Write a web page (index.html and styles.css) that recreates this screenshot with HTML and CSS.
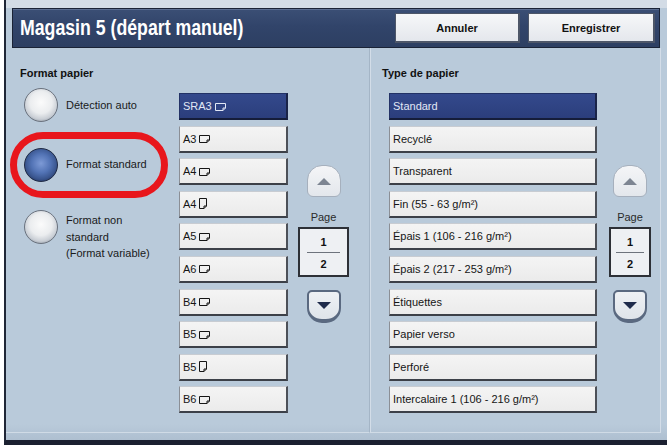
FILE: index.html
```html
<!DOCTYPE html>
<html lang="fr">
<head>
<meta charset="utf-8">
<title>Magasin 5 (départ manuel)</title>
<link rel="stylesheet" href="styles.css">
</head>
<body>
<div class="screen">
  <header class="titlebar">
    <h1 class="title"><span class="title-text">Magasin 5 (départ manuel)</span></h1>
    <div class="actions">
      <button class="tbtn tbtn-cancel">Annuler</button>
      <button class="tbtn tbtn-save">Enregistrer</button>
    </div>
  </header>
  <main class="content">
    <section class="panel panel-left">
      <h2 class="heading">Format papier</h2>
      <div class="body">
        <div class="radios">
          <div class="radio r1"><span class="dot"></span><span class="rlabel">Détection auto</span></div>
          <div class="radio r2"><span class="dot dot-on"></span><span class="rlabel">Format standard</span><span class="mark"></span></div>
          <div class="radio r3"><span class="dot"></span><span class="rlabel rlabel-multi">Format non<br>standard<br>(Format variable)</span></div>
        </div>
        <div class="list list-size">
          <div class="item item-sel">SRA3<svg class="ico-l" width="11" height="8" viewBox="0 0 11 8"><path d="M0.5 0.5H10.5V5L8 7.5H0.5Z M8 7.5V5H10.5" fill="none" stroke="currentColor"/></svg></div>
          <div class="item">A3<svg class="ico-l" width="11" height="8" viewBox="0 0 11 8"><path d="M0.5 0.5H10.5V5L8 7.5H0.5Z M8 7.5V5H10.5" fill="none" stroke="currentColor"/></svg></div>
          <div class="item">A4<svg class="ico-l" width="11" height="8" viewBox="0 0 11 8"><path d="M0.5 0.5H10.5V5L8 7.5H0.5Z M8 7.5V5H10.5" fill="none" stroke="currentColor"/></svg></div>
          <div class="item">A4<svg class="ico-p" width="8" height="11" viewBox="0 0 8 11"><path d="M0.5 0.5H7.5V8L5 10.5H0.5Z M5 10.5V8H7.5" fill="none" stroke="currentColor"/></svg></div>
          <div class="item">A5<svg class="ico-l" width="11" height="8" viewBox="0 0 11 8"><path d="M0.5 0.5H10.5V5L8 7.5H0.5Z M8 7.5V5H10.5" fill="none" stroke="currentColor"/></svg></div>
          <div class="item">A6<svg class="ico-l" width="11" height="8" viewBox="0 0 11 8"><path d="M0.5 0.5H10.5V5L8 7.5H0.5Z M8 7.5V5H10.5" fill="none" stroke="currentColor"/></svg></div>
          <div class="item">B4<svg class="ico-l" width="11" height="8" viewBox="0 0 11 8"><path d="M0.5 0.5H10.5V5L8 7.5H0.5Z M8 7.5V5H10.5" fill="none" stroke="currentColor"/></svg></div>
          <div class="item">B5<svg class="ico-l" width="11" height="8" viewBox="0 0 11 8"><path d="M0.5 0.5H10.5V5L8 7.5H0.5Z M8 7.5V5H10.5" fill="none" stroke="currentColor"/></svg></div>
          <div class="item">B5<svg class="ico-p" width="8" height="11" viewBox="0 0 8 11"><path d="M0.5 0.5H7.5V8L5 10.5H0.5Z M5 10.5V8H7.5" fill="none" stroke="currentColor"/></svg></div>
          <div class="item">B6<svg class="ico-l" width="11" height="8" viewBox="0 0 11 8"><path d="M0.5 0.5H10.5V5L8 7.5H0.5Z M8 7.5V5H10.5" fill="none" stroke="currentColor"/></svg></div>
        </div>
        <div class="pager pager-left">
          <button class="pg-up"><span class="tri-up"></span></button>
          <div class="pg-label">Page</div>
          <div class="pg-box"><span class="pg-num">1</span><span class="pg-rule"></span><span class="pg-num">2</span></div>
          <button class="pg-down"><span class="tri-down"></span></button>
        </div>
      </div>
    </section>
    <section class="panel panel-right">
      <h2 class="heading">Type de papier</h2>
      <div class="body">
        <div class="list list-type">
          <div class="item item-sel">Standard</div>
          <div class="item">Recyclé</div>
          <div class="item">Transparent</div>
          <div class="item">Fin (55 - 63 g/m²)</div>
          <div class="item">Épais 1 (106 - 216 g/m²)</div>
          <div class="item">Épais 2 (217 - 253 g/m²)</div>
          <div class="item">Étiquettes</div>
          <div class="item">Papier verso</div>
          <div class="item">Perforé</div>
          <div class="item">Intercalaire 1 (106 - 216 g/m²)</div>
        </div>
        <div class="pager pager-right">
          <button class="pg-up"><span class="tri-up"></span></button>
          <div class="pg-label">Page</div>
          <div class="pg-box"><span class="pg-num">1</span><span class="pg-rule"></span><span class="pg-num">2</span></div>
          <button class="pg-down"><span class="tri-down"></span></button>
        </div>
      </div>
    </section>
  </main>
</div>
</body>
</html>
```
FILE: styles.css
```css
* { box-sizing: border-box; }

html, body {
  margin: 0;
  padding: 0;
  background: #ffffff;
}

body {
  font-family: "Liberation Sans", Arial, sans-serif;
  font-size: 11px;
  color: #161616;
}

.screen {
  margin-left: 4px;
  width: 663px;
  height: 445px;
  border-left: 2px solid #1f2636;
  border-bottom: 5px solid #1b2030;
  padding-top: 8px;
  background: linear-gradient(#d3dce6 0, #d3dce6 8px, #b9cada 8px, #b9cada 100%);
  display: flex;
  flex-direction: column;
}

/* ---------- title bar ---------- */
.titlebar {
  margin-left: 6px;
  width: 648px;
  height: 40px;
  flex: none;
  display: flex;
  align-items: center;
  justify-content: space-between;
  padding: 0 4px 0 7px;
  background: linear-gradient(#3b4f75, #31446a 45%, #2d3f62);
  border: 1px solid #1a2336;
  box-shadow: inset 0 1px 0 #5b6e92;
}

.title {
  margin: 0;
  width: 240px;
  font-family: "Liberation Sans", Arial, sans-serif;
  font-weight: bold;
  font-size: 22px;
  line-height: 26px;
  color: #ffffff;
  white-space: nowrap;
}

.title-text {
  display: inline-block;
  transform: scaleX(0.805);
  transform-origin: 0 50%;
}

.actions {
  display: flex;
  gap: 8px;
}

.tbtn {
  height: 30px;
  padding: 0;
  font-family: "Liberation Sans", Arial, sans-serif;
  font-size: 11px;
  font-weight: bold;
  color: #111;
  background: linear-gradient(#f6f7f9, #e4e7ec);
  border: 1px solid #4d5668;
  border-right-width: 2px;
  border-bottom-width: 2px;
}

.tbtn-cancel { width: 125px; }
.tbtn-save { width: 127px; }

/* ---------- content ---------- */
.content {
  flex: 1;
  display: flex;
  padding-bottom: 7px;
  background: linear-gradient(to bottom, #b9cada 0, #b9cada 96%, #aebfd0 100%);
}

.panel {
  height: 100%;
  padding-top: 18px;
  border-bottom: 1px solid #d0dbe6;
}

.panel-left {
  width: 364px;
  padding-left: 14px;
  border-right: 1px solid #a4b5c6;
}

.panel-right {
  width: 291px;
  padding-left: 11px;
  border-left: 1px solid #d3dde8;
  border-right: 1px solid #d3dde8;
}

.heading {
  margin: 0 0 8px 0;
  font-size: 11px;
  line-height: 14px;
  font-weight: bold;
  color: #111;
}

.body {
  display: flex;
  align-items: flex-start;
}

/* ---------- radios ---------- */
.radios {
  margin-left: 4px;
  width: 155px;
  display: flex;
  flex-direction: column;
}

.radio {
  position: relative;
  display: flex;
  align-items: flex-start;
}

.r2 { margin-top: 26px; }
.r3 { margin-top: 28px; }

.dot {
  flex: none;
  width: 34px;
  height: 34px;
  border-radius: 50%;
  border: 1px solid #6a727e;
  background: radial-gradient(circle at 50% 42%, #fbfbfb 0, #ebedef 45%, #c9ced5 68%, #8d96a2 84%, #707985 100%);
}

.dot-on {
  border-color: #1e2944;
  background: radial-gradient(circle at 50% 45%, #7d9ad6 0, #5273b5 40%, #3a568f 65%, #263865 82%, #1b2440 100%);
}

.rlabel {
  margin-left: 8px;
  padding-top: 9px;
  line-height: 16px;
  color: #1a1a1a;
  white-space: nowrap;
}

.r2 .rlabel { padding-top: 8px; }

.rlabel-multi {
  padding-top: 2px;
  line-height: 16.5px;
}

.mark {
  position: absolute;
  left: -14px;
  top: -16px;
  width: 158px;
  height: 66px;
  border: 7px solid #e8161c;
  border-radius: 33px;
  pointer-events: none;
}

/* ---------- lists ---------- */
.list {
  margin-top: 5px;
  display: flex;
  flex-direction: column;
  gap: 5.6px;
}

.list-size { width: 109px; }

.list-type {
  margin-left: 7px;
  width: 208px;
}

.item {
  height: 27px;
  display: flex;
  align-items: center;
  padding-left: 3px;
  white-space: nowrap;
  color: #151515;
  background: linear-gradient(#f4f4f4, #ebebeb);
  border: 1px solid #8b8f96;
  border-top-color: #c8ccd2;
  border-right: 2px solid #4c5058;
  border-bottom: 2px solid #3c4048;
}

.item-sel {
  background: linear-gradient(#34498c, #2b3e7c);
  color: #e2e8f6;
  border-color: #233266;
  border-right-color: #1a2448;
  border-bottom-color: #151d3a;
}

.ico-l, .ico-p {
  margin-left: 3px;
  flex: none;
}

.ico-l { margin-top: 1px; }

/* ---------- pager ---------- */
.pager {
  margin-top: 77px;
  display: flex;
  flex-direction: column;
  align-items: center;
}

.pager-left {
  margin-left: 10px;
  width: 51px;
}

.pager-right {
  margin-left: 11px;
  width: 44px;
}

.pg-up {
  width: 34px;
  height: 32px;
  padding: 0;
  display: flex;
  align-items: center;
  justify-content: center;
  background: linear-gradient(#f4f5f7, #e3e7ec);
  border: 1px solid #a6b0bd;
  border-radius: 15px 15px 6px 6px;
}

.tri-up {
  width: 0;
  height: 0;
  border-left: 7px solid transparent;
  border-right: 7px solid transparent;
  border-bottom: 7px solid #7d8592;
}

.pg-label {
  margin-top: 13px;
  line-height: 14px;
  color: #2a2a2a;
}

.pg-box {
  margin-top: 3px;
  width: 100%;
  height: 50px;
  padding-top: 6px;
  display: flex;
  flex-direction: column;
  align-items: center;
  background: #eef0f3;
  border: 2px solid #2d3036;
}

.pager-left .pg-box { width: 51px; }
.pager-right .pg-box { width: 42px; }

.pg-num {
  font-weight: bold;
  line-height: 14px;
  color: #111;
}

.pg-rule {
  margin: 3px 0 4px 0;
  width: 72%;
  height: 1px;
  background: #6d737c;
}

.pg-down {
  margin-top: 13px;
  width: 34px;
  height: 33px;
  padding: 0;
  display: flex;
  align-items: center;
  justify-content: center;
  background: linear-gradient(#eef1f4, #dfe4ea);
  border: 2px solid #5a6980;
  border-bottom-width: 4px;
  border-radius: 5px 5px 15px 15px;
}

.tri-down {
  width: 0;
  height: 0;
  border-left: 7px solid transparent;
  border-right: 7px solid transparent;
  border-top: 7px solid #1e2b4b;
}
```
